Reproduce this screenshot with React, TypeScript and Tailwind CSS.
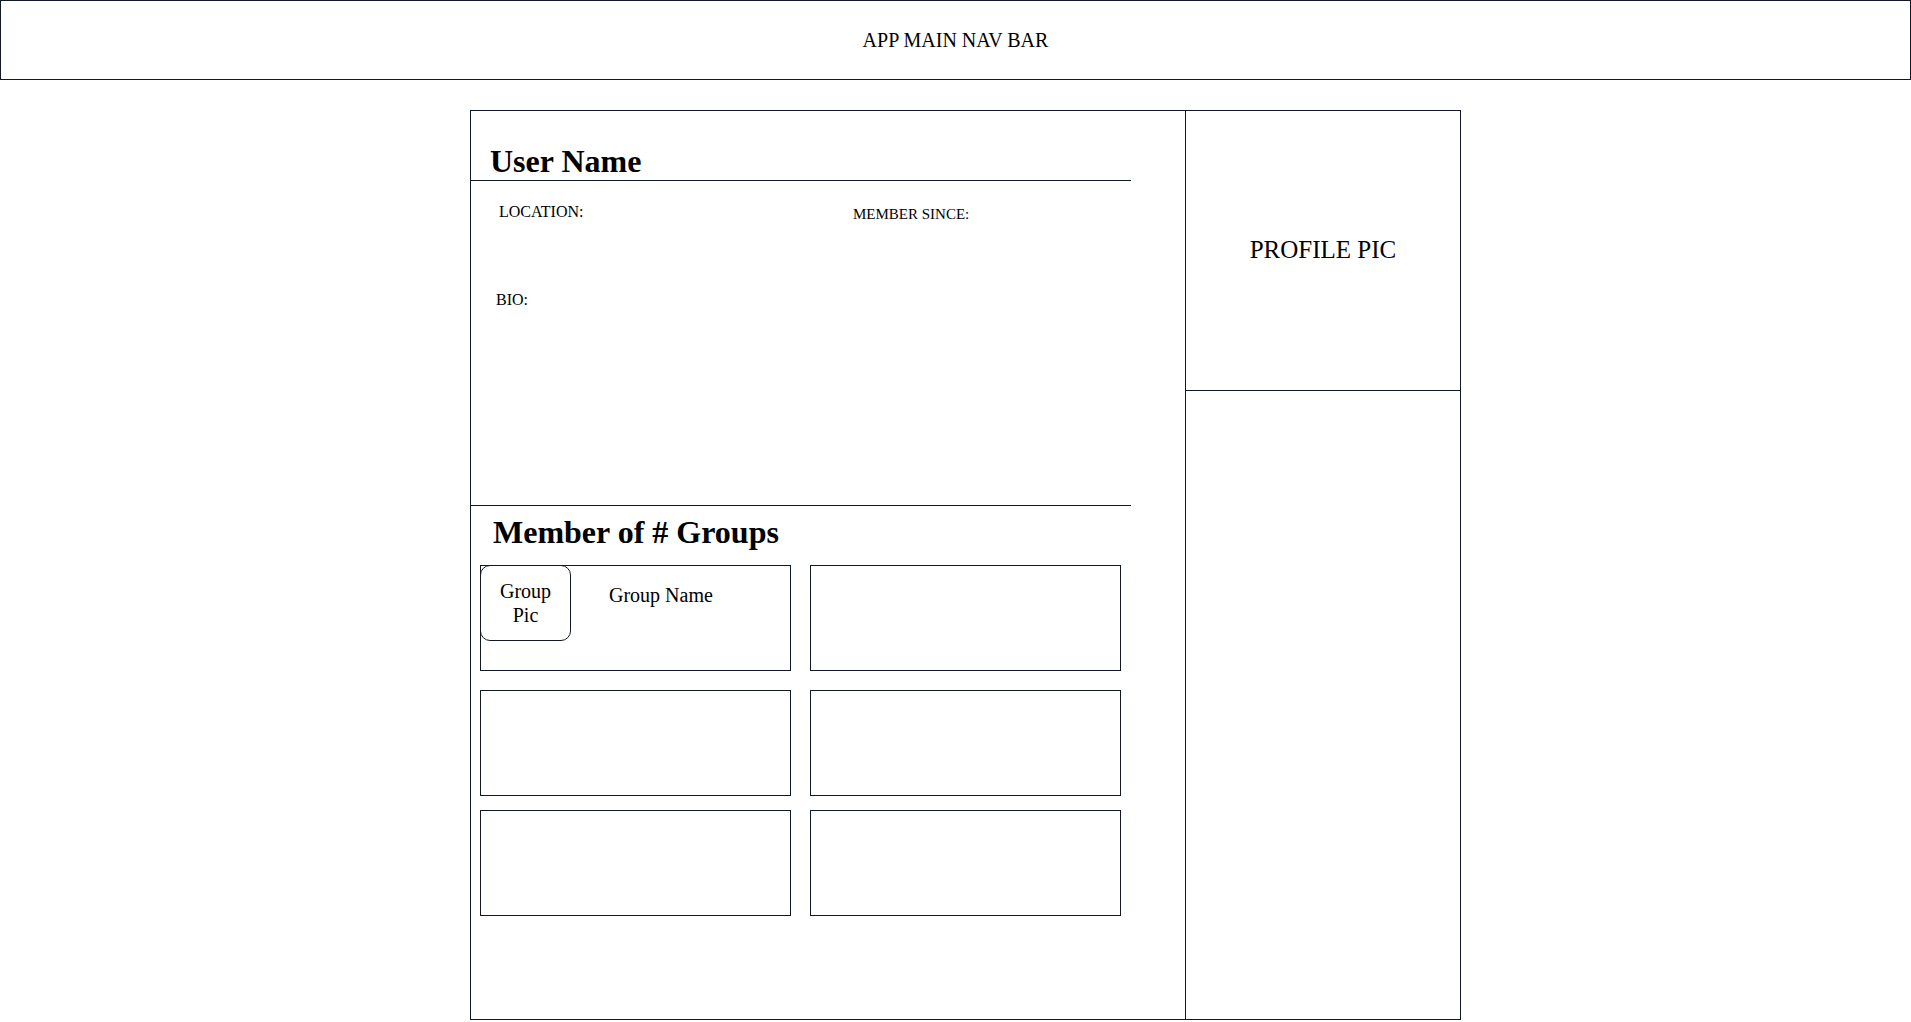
import React from 'react';

const serif = { fontFamily: '"Liberation Serif", "Times New Roman", serif' };

const GroupCard: React.FC<{ first?: boolean }> = ({ first }) => (
  <div className="w-[311px] h-[106px] border border-[#111a24] flex items-start">
    {first && (
      <>
        <div className="-ml-px -mt-px w-[91px] h-[76px] rounded-[10px] border border-[#111a24] flex items-center justify-center text-center text-[20px] leading-[24px] text-black">
          Group
          <br />
          Pic
        </div>
        <div className="ml-[38px] mt-[19px] text-[20px] leading-none text-black">Group Name</div>
      </>
    )}
  </div>
);

export default function App() {
  return (
    <div className="min-h-screen bg-white text-black" style={serif}>
      {/* Nav */}
      <header className="h-[80px] w-full border border-[#111a24] flex items-center justify-center">
        <span className="text-[20px] leading-none">APP MAIN NAV BAR</span>
      </header>

      {/* Profile card */}
      <div className="mt-[30px] ml-[470px] w-[991px] h-[910px] border border-[#111a24] flex">
        {/* Left column */}
        <div className="w-[715px] border-r border-[#111a24] flex flex-col">
          <div className="-ml-px w-[661px] h-[70px] border-b border-[#111a24] pt-[34px] pl-[20px]">
            <h1 className="text-[32px] font-bold leading-none">User Name</h1>
          </div>

          <div className="-ml-px w-[661px] h-[325px] border-b border-[#111a24]">
            <div className="flex items-start pt-[23px]">
              <div className="w-[383px] pl-[29px] text-[16px] leading-none">LOCATION:</div>
              <div className="mt-[3px] text-[15px] leading-none">MEMBER SINCE:</div>
            </div>
            <div className="mt-[70px] pl-[26px] text-[16px] leading-none">BIO:</div>
          </div>

          <div className="pt-[10px] pl-[22px] text-[32px] font-bold leading-none">Member of # Groups</div>

          <div className="mt-[17px] pl-[9px] flex flex-col">
            <div className="flex gap-[19px]">
              <GroupCard first />
              <GroupCard />
            </div>
            <div className="mt-[19px] flex gap-[19px]">
              <GroupCard />
              <GroupCard />
            </div>
            <div className="mt-[14px] flex gap-[19px]">
              <GroupCard />
              <GroupCard />
            </div>
          </div>
        </div>

        {/* Right column */}
        <div className="flex-1 flex flex-col">
          <div className="h-[280px] border-b border-[#111a24] flex items-center justify-center pb-[2px]">
            <span className="text-[25px] leading-none">PROFILE PIC</span>
          </div>
        </div>
      </div>
    </div>
  );
}
